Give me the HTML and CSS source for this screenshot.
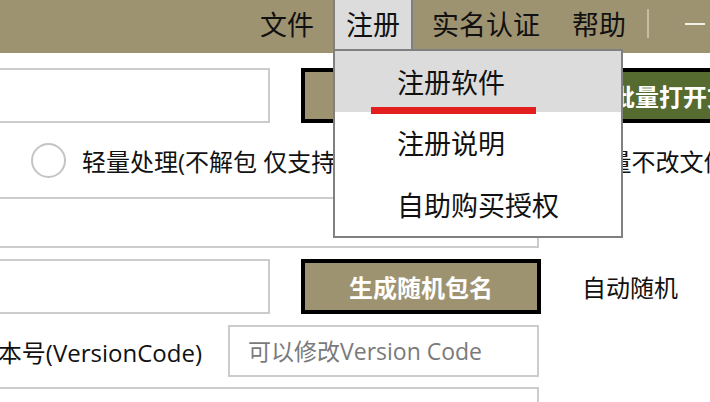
FILE: index.html
```html
<!DOCTYPE html>
<html lang="zh-CN">
  <head>
    <meta charset="UTF-8" />
    <meta name="viewport" content="width=device-width, initial-scale=1.0" />
    <title>APK 修改工具</title>
    <link rel="stylesheet" href="styles.css">
  </head>
  <body>
    <header class="menubar">
      <ul class="menubar_menu">
        <li><a href="#">文件</a></li>
        <li class="active">
          <a href="#">注册</a>
          <ul class="dropdown">
            <li class="hover"><a href="#">注册软件</a></li>
            <li><a href="#">注册说明</a></li>
            <li><a href="#">自助购买授权</a></li>
          </ul>
          <span class="mark"></span>
        </li>
        <li><a href="#">实名认证</a></li>
        <li><a href="#">帮助</a></li>
      </ul>
      <span class="menubar_sep"></span>
      <div class="win-controls">
        <span class="win-min"></span>
        <span class="win-max"></span>
        <span class="win-close"></span>
      </div>
    </header>

    <main class="content">
      <div class="row row-file">
        <input class="field field-short" type="text" />
        <button class="btn btn-olive">选择文件</button>
        <button class="btn btn-green">批量打开文件夹</button>
      </div>

      <div class="row row-mode">
        <label class="radio">
          <span class="radio_dot"></span>
          <span>轻量处理(不解包 仅支持签名和图标修改)</span>
        </label>
        <label class="radio radio-second">
          <span class="radio_dot"></span>
          <span>全量不改文件名</span>
        </label>
      </div>

      <div class="row row-field">
        <input class="field field-long" type="text" />
      </div>

      <div class="row row-pkg">
        <input class="field field-short" type="text" />
        <button class="btn btn-olive">生成随机包名</button>
        <span class="hint">自动随机</span>
      </div>

      <div class="row row-version">
        <span class="label">版本号(VersionCode)</span>
        <input class="field field-version" type="text" placeholder="可以修改Version Code" />
      </div>

      <div class="row row-field">
        <input class="field field-long" type="text" />
      </div>
    </main>
  </body>
</html>
```

FILE: styles.css
```css
* {
  box-sizing: border-box;
}

html,
body {
  overflow: hidden;
}

body {
  margin: 0;
  font-family: "Open Sans", "Noto Sans CJK SC", sans-serif;
  background: #ffffff;
  color: #111111;
}

/* menu bar */
.menubar {
  position: relative;
  z-index: 2;
  display: flex;
  align-items: flex-start;
  height: 53px;
  padding-left: 247px;
  background: #9e9370;
  width: 820px;
}

.menubar_menu {
  display: flex;
  gap: 6px;
  list-style: none;
  margin: 0;
  padding: 0;
}

.menubar_menu > li {
  position: relative;
  height: 49px;
  padding: 0 11px;
  border-left: 2px solid transparent;
  border-right: 2px solid transparent;
}

.menubar_menu > li > a {
  display: block;
  font-size: 27px;
  line-height: 49px;
  color: #111111;
  text-decoration: none;
}

.menubar_menu > li.active {
  background: #dcdcdc;
  border-left-color: #808080;
  border-right-color: #808080;
}

.menubar_sep {
  flex-shrink: 0;
  width: 2px;
  height: 29px;
  margin: 9px 0 0 8px;
  background: #c6bea3;
}

.win-controls {
  display: flex;
  gap: 30px;
  margin-left: 36px;
}

.win-min {
  width: 20px;
  height: 2px;
  margin-top: 23px;
  background: #f2efe6;
}

.win-max,
.win-close {
  width: 20px;
  height: 20px;
  margin-top: 14px;
  border: 2px solid #f2efe6;
}

/* dropdown */
.dropdown {
  position: absolute;
  top: 49px;
  left: -2px;
  width: 290px;
  margin: 0;
  padding: 0;
  list-style: none;
  background: #ffffff;
  border: 2px solid #808080;
}

.dropdown li {
  height: 62px;
  padding: 2px 0 0 62px;
}

.dropdown li a {
  font-size: 27px;
  line-height: 60px;
  color: #111111;
  text-decoration: none;
}

.dropdown li.hover {
  height: 61px;
  background: #dcdcdc;
}

.mark {
  position: absolute;
  top: 107px;
  left: 36px;
  width: 165px;
  height: 7px;
  background: #e31e1e;
}

/* form */
.content {
  display: flex;
  flex-direction: column;
  margin-left: -60px;
  padding-top: 15px;
}

.row {
  display: flex;
  align-items: center;
}

.row > * {
  flex-shrink: 0;
}

.field {
  display: block;
  height: 55px;
  padding: 0 18px;
  border: 2px solid #cccccc;
  background: #ffffff;
  font-family: "Open Sans", "Noto Sans CJK SC", sans-serif;
  font-size: 23px;
  color: #333333;
  outline: none;
}

.field::placeholder {
  color: #7a7a7a;
}

.field-short {
  width: 330px;
}

.field-long {
  width: 599px;
  height: 51px;
}

.btn {
  height: 55px;
  border: 4px solid #000000;
  font-family: "Open Sans", "Noto Sans CJK SC", sans-serif;
  font-size: 24px;
  font-weight: 700;
  color: #ffffff;
  cursor: pointer;
}

.btn-olive {
  width: 240px;
  margin-left: 31px;
  background: #9e9370;
}

.btn-green {
  width: 260px;
  margin-left: 30px;
  padding: 0 0 0 36px;
  text-align: left;
  background: #566b30;
}

.row-mode {
  height: 74px;
  padding-left: 91px;
}

.radio {
  display: flex;
  align-items: center;
  gap: 16px;
  font-size: 24px;
  white-space: nowrap;
}

.radio_dot {
  width: 35px;
  height: 35px;
  border: 2px solid #c4c4c4;
  border-radius: 50%;
}

.radio-second {
  margin-left: 22px;
}

.row-pkg {
  margin-top: 11px;
}

.hint {
  margin-left: 41px;
  font-size: 24px;
}

.row-version {
  margin-top: 11px;
}

.label {
  width: 262px;
  margin-right: 26px;
  font-size: 24px;
  text-align: right;
  white-space: nowrap;
}

.field-version {
  width: 311px;
  height: 52px;
}

.row-version + .row-field {
  margin-top: 10px;
}
```
